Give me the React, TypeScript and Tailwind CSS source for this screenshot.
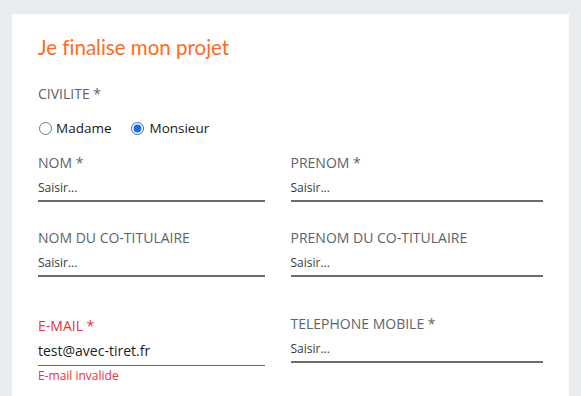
import React from "react";

const font = { fontFamily: '"Open Sans", "Noto Sans", sans-serif' };

function Field({ label, placeholder }: { label: string; placeholder: string }) {
  return (
    <div className="flex flex-col">
      <div className="text-[14px] leading-5 text-[#5c636b]">{label}</div>
      <div className="mt-[7px] text-[12px] leading-4 text-[#333a40] pb-[4px] border-b-2 border-[#6b6b6b]">
        {placeholder}
      </div>
    </div>
  );
}

export default function App() {
  return (
    <div className="w-[581px] h-[396px] overflow-hidden bg-[#e9edf0] pt-[14px] pl-[12px] pr-[12px]" style={font}>
      <div className="bg-white h-[400px] pl-[26px] pr-[26px] pt-[19px]">
        <h1
          className="text-[20.5px] leading-7 font-normal text-[#ff6a22] [font-variant-ligatures:none]"
          style={{ fontFamily: 'Lato, "Open Sans", sans-serif' }}
        >
          Je finalise mon projet
        </h1>
        <div className="mt-[23px] text-[14px] leading-5 text-[#5c636b]">CIVILITE *</div>
        <div className="mt-[14px] flex items-center h-5 text-[13.5px] text-[#16191c] font-medium">
          <label className="flex items-center">
            <input type="radio" name="civ" className="ml-[1px] w-[13px] h-[13px] accent-[#1a6fe0]" />
            <span className="ml-[4px]">Madame</span>
          </label>
          <label className="flex items-center ml-[20px]">
            <input type="radio" name="civ" defaultChecked className="w-[13px] h-[13px] accent-[#1a6fe0]" />
            <span className="ml-[5px]">Monsieur</span>
          </label>
        </div>
        <div className="mt-[15px] grid grid-cols-2">
          <div className="pr-[26px]">
            <Field label="NOM *" placeholder="Saisir..." />
          </div>
          <div>
            <Field label="PRENOM *" placeholder="Saisir..." />
          </div>
        </div>
        <div className="mt-[26px] grid grid-cols-2">
          <div className="pr-[26px]">
            <Field label="NOM DU CO-TITULAIRE" placeholder="Saisir..." />
          </div>
          <div>
            <Field label="PRENOM DU CO-TITULAIRE" placeholder="Saisir..." />
          </div>
        </div>
        <div className="mt-[37px] grid grid-cols-2 items-start">
          <div className="pr-[26px] mt-[2px] flex flex-col">
            <div className="text-[14px] leading-5 text-[#e8323c]">E-MAIL *</div>
            <div className="mt-[5px] text-[14px] leading-5 text-[#1b1e21] pb-[4px] border-b border-[#e8323c]">
              test@avec-tiret.fr
            </div>
            <div className="mt-[2px] text-[12px] leading-4 text-[#e8323c]">E-mail invalide</div>
          </div>
          <div>
            <Field label="TELEPHONE MOBILE *" placeholder="Saisir..." />
          </div>
        </div>
      </div>
    </div>
  );
}
